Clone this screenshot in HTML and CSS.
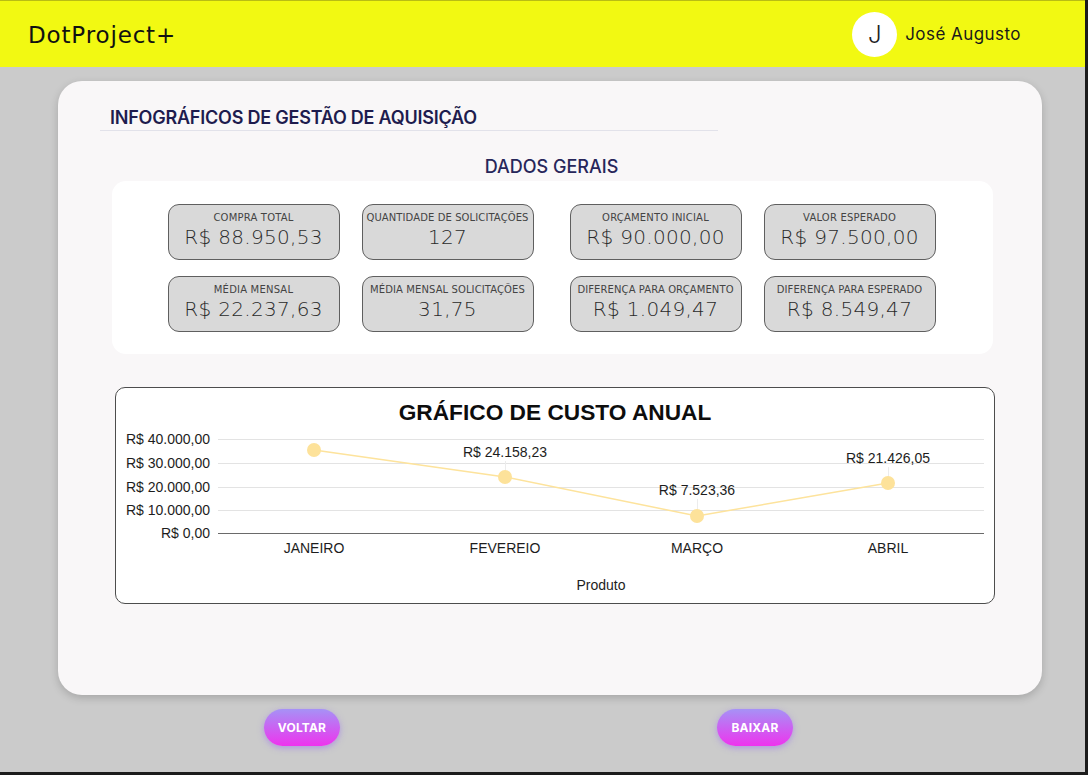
FILE: index.html
```html
<!DOCTYPE html>
<html lang="pt-BR">
<head>
<meta charset="utf-8">
<title>DotProject+</title>
<link rel="stylesheet" href="styles.css">
</head>
<body>
<div class="app">
  <header class="topbar">
    <div class="logo">DotProject+</div>
    <div class="user">
      <div class="avatar">J</div>
      <span class="user-name">José Augusto</span>
    </div>
  </header>
  <main class="main">
    <section class="card">
      <div class="card-head">
        <h1 class="page-title">INFOGRÁFICOS DE GESTÃO DE AQUISIÇÃO</h1>
      </div>
      <h2 class="section-title">DADOS GERAIS</h2>
      <div class="stats">
        <div class="stat-group">
          <div class="stat"><span class="stat-label">COMPRA TOTAL</span><span class="stat-value">R$ 88.950,53</span></div>
          <div class="stat"><span class="stat-label tight">QUANTIDADE DE SOLICITAÇÕES</span><span class="stat-value">127</span></div>
          <div class="stat"><span class="stat-label">MÉDIA MENSAL</span><span class="stat-value">R$ 22.237,63</span></div>
          <div class="stat"><span class="stat-label tight">MÉDIA MENSAL SOLICITAÇÕES</span><span class="stat-value">31,75</span></div>
        </div>
        <div class="stat-group">
          <div class="stat"><span class="stat-label">ORÇAMENTO INICIAL</span><span class="stat-value">R$ 90.000,00</span></div>
          <div class="stat"><span class="stat-label">VALOR ESPERADO</span><span class="stat-value">R$ 97.500,00</span></div>
          <div class="stat"><span class="stat-label tight">DIFERENÇA PARA ORÇAMENTO</span><span class="stat-value">R$ 1.049,47</span></div>
          <div class="stat"><span class="stat-label tight">DIFERENÇA PARA ESPERADO</span><span class="stat-value">R$ 8.549,47</span></div>
        </div>
      </div>
      <div class="chart">
        <svg class="chart-svg" width="878" height="215" viewBox="0 0 878 215">
          <text class="chart-title" x="439" y="32" text-anchor="middle">GRÁFICO DE CUSTO ANUAL</text>
          <g class="grid">
            <line x1="102" y1="51.5" x2="868" y2="51.5"/>
            <line x1="102" y1="75.5" x2="868" y2="75.5"/>
            <line x1="102" y1="99.5" x2="868" y2="99.5"/>
            <line x1="102" y1="122.5" x2="868" y2="122.5"/>
          </g>
          <line class="axis" x1="102" y1="145.5" x2="868" y2="145.5"/>
          <g class="ylabels" text-anchor="end">
            <text x="94" y="56">R$ 40.000,00</text>
            <text x="94" y="80">R$ 30.000,00</text>
            <text x="94" y="104">R$ 20.000,00</text>
            <text x="94" y="127">R$ 10.000,00</text>
            <text x="94" y="150">R$ 0,00</text>
          </g>
          <g class="leaders">
            <line x1="389.5" y1="73" x2="389.5" y2="84"/>
            <line x1="581.5" y1="111" x2="581.5" y2="122"/>
            <line x1="772.5" y1="79" x2="772.5" y2="90"/>
          </g>
          <polyline class="series" points="198,62 389,89 581,128 772,95"/>
          <g class="points">
            <circle cx="198" cy="62" r="7"/>
            <circle cx="389" cy="89" r="7"/>
            <circle cx="581" cy="128" r="7"/>
            <circle cx="772" cy="95" r="7"/>
          </g>
          <g class="vlabels" text-anchor="middle">
            <text x="389" y="69">R$ 24.158,23</text>
            <text x="581" y="107">R$ 7.523,36</text>
            <text x="772" y="75">R$ 21.426,05</text>
          </g>
          <g class="xlabels" text-anchor="middle">
            <text x="198" y="165">JANEIRO</text>
            <text x="389" y="165">FEVEREIO</text>
            <text x="581" y="165">MARÇO</text>
            <text x="772" y="165">ABRIL</text>
          </g>
          <text class="axis-title" x="485" y="202" text-anchor="middle">Produto</text>
        </svg>
      </div>
    </section>
    <div class="actions">
      <button class="btn" type="button">VOLTAR</button>
      <button class="btn" type="button">BAIXAR</button>
    </div>
  </main>
</div>
</body>
</html>
```

FILE: styles.css
```css
* { box-sizing: border-box; }

html, body {
  margin: 0;
  padding: 0;
}

body {
  background: #1c1c1c;
  width: 1088px;
  height: 775px;
  overflow: hidden;
  font-family: "Inter", "Noto Sans", sans-serif;
}

.app {
  width: 1085px;
  height: 772px;
  background: #cbcbcb;
  display: flex;
  flex-direction: column;
}

.topbar {
  height: 67px;
  background: #f2f912;
  border-top: 1px solid #b9bd14;
  display: flex;
  align-items: center;
  justify-content: space-between;
  padding: 0 64px 0 28px;
  flex-shrink: 0;
}

.logo {
  font-family: "DejaVu Sans", sans-serif;
  font-size: 23px;
  font-weight: 400;
  color: #111;
  letter-spacing: 0.85px;
  padding-top: 1px;
}

.user {
  display: flex;
  align-items: center;
  gap: 8px;
}

.avatar {
  width: 45px;
  height: 45px;
  border-radius: 50%;
  background: #ffffff;
  display: flex;
  align-items: center;
  justify-content: center;
  font-size: 24px;
  font-weight: 300;
  color: #222;
}

.user-name {
  font-size: 17px;
  color: #1a1a1a;
  letter-spacing: 0.45px;
}

.main {
  flex: 1;
  display: flex;
  flex-direction: column;
  padding: 14px 0 0 58px;
}

.card {
  width: 984px;
  height: 614px;
  background: #f9f7f8;
  border-radius: 24px;
  box-shadow: 0 3px 8px rgba(0, 0, 0, 0.18);
  padding-top: 26px;
  display: flex;
  flex-direction: column;
}

.card-head {
  margin-left: 42px;
  width: 618px;
  border-bottom: 1px solid #e2e2ea;
  padding: 0 0 1px 10px;
}

.page-title {
  margin: 0;
  font-size: 18px;
  line-height: 22px;
  font-weight: 600;
  color: #1e1c4e;
  letter-spacing: -0.22px;
}

.section-title {
  margin: 25px 0 0 0;
  text-align: center;
  font-size: 18px;
  line-height: 22px;
  font-weight: 500;
  color: #27265a;
  padding-left: 3px;
}

.stats {
  margin: 3px 0 0 54px;
  width: 881px;
  height: 173px;
  background: #ffffff;
  border-radius: 14px;
  display: flex;
  justify-content: center;
  align-items: center;
  gap: 36px;
  padding-right: 2px;
}

.stat-group {
  display: grid;
  grid-template-columns: 172px 172px;
  column-gap: 22px;
  row-gap: 16px;
}

.stat {
  height: 56px;
  background: #d9d9d9;
  border: 1px solid #5f5f5f;
  border-radius: 11px;
  display: flex;
  flex-direction: column;
  align-items: center;
  padding-top: 7px;
  color: #2b2b2b;
  font-family: "DejaVu Sans", sans-serif;
}

.stat-label {
  font-size: 10px;
  line-height: 12px;
  color: #444;
  letter-spacing: 0.2px;
  white-space: nowrap;
}

.stat-label.tight {
  font-size: 10px;
  letter-spacing: 0.1px;
}

.stat-value {
  font-size: 20px;
  line-height: 26px;
  font-weight: 300;
  color: #2a2a2a;
  letter-spacing: 0.3px;
  white-space: nowrap;
}

.chart {
  margin: 33px 0 0 57px;
  width: 880px;
  height: 217px;
  background: #ffffff;
  border: 1px solid #4d4d4d;
  border-radius: 10px;
  overflow: hidden;
}

.chart-svg {
  display: block;
  font-family: "Liberation Sans", Arial, sans-serif;
}

.chart-title {
  font-size: 22.7px;
  font-weight: 700;
  fill: #0d0d0d;
}

.grid line {
  stroke: #e3e3e3;
  stroke-width: 1;
}

.axis {
  stroke: #6a6a6a;
  stroke-width: 1;
}

.ylabels text,
.vlabels text,
.xlabels text,
.axis-title {
  font-size: 14px;
  fill: #1d1d1d;
}

.leaders line {
  stroke: #ececec;
  stroke-width: 1;
}

.series {
  fill: none;
  stroke: #fde39c;
  stroke-width: 1.5;
}

.points circle {
  fill: #fde29a;
}

.actions {
  display: flex;
  gap: 377px;
  padding: 14px 0 0 206px;
}

.btn {
  width: 76px;
  height: 37px;
  border: none;
  border-radius: 19px;
  background: linear-gradient(180deg, #a692f6 0%, #ee33ee 100%);
  box-shadow: 0 2px 6px rgba(150, 110, 240, 0.55);
  color: #ffffff;
  font-family: "Inter", sans-serif;
  font-size: 12px;
  font-weight: 700;
  letter-spacing: 0.2px;
  padding: 0;
  cursor: pointer;
}
```
